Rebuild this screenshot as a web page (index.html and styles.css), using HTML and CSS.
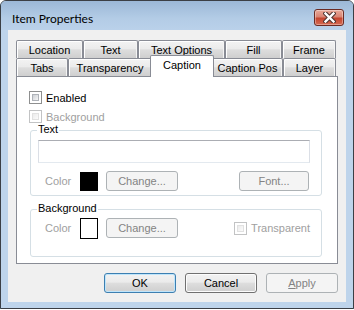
FILE: index.html
```html
<!DOCTYPE html>
<html>
<head>
<meta charset="utf-8">
<link rel="stylesheet" href="styles.css">
</head>
<body>
<div class="window">
  <div class="titlebar">
    <span class="title">Item Properties</span>
    <div class="close">
      <svg width="13" height="11" viewBox="0 0 13 11">
        <path d="M2.5 1.5 L10.5 9.5 M10.5 1.5 L2.5 9.5" stroke="#4a3330" stroke-width="4.4" stroke-linecap="square" fill="none"/>
        <path d="M2.5 1.5 L10.5 9.5 M10.5 1.5 L2.5 9.5" stroke="#ffffff" stroke-width="2.4" stroke-linecap="square" fill="none"/>
      </svg>
    </div>
  </div>
  <div class="client">
    <div class="tabctl">
      <div class="tabrow">
        <div class="tab w-location">Location</div>
        <div class="tab w-text">Text</div>
        <div class="tab w-textopt">Text Options</div>
        <div class="tab w-fill">Fill</div>
        <div class="tab w-frame">Frame</div>
      </div>
      <div class="tabrow">
        <div class="tab w-tabs">Tabs</div>
        <div class="tab w-transp">Transparency</div>
        <div class="tab sel">Caption</div>
        <div class="tab w-cappos">Caption Pos</div>
        <div class="tab w-layer">Layer</div>
      </div>
      <div class="panel">
        <div class="check-row"><span class="cb"></span><span>Enabled</span></div>
        <div class="check-row dis"><span class="cb"></span><span>Background</span></div>
        <div class="group g-text">
          <span class="glabel">Text</span>
          <div class="textbox"></div>
          <div class="color-row">
            <span class="clabel">Color</span>
            <span class="swatch black"></span>
            <span class="btn dis change">Change...</span>
            <span class="btn dis font">Font...</span>
          </div>
        </div>
        <div class="group g-bg">
          <span class="glabel">Background</span>
          <div class="color-row first">
            <span class="clabel">Color</span>
            <span class="swatch white"></span>
            <span class="btn dis change">Change...</span>
            <div class="check-row dis trans"><span class="cb"></span><span>Transparent</span></div>
          </div>
        </div>
      </div>
    </div>
    <div class="buttons">
      <span class="btn def">OK</span>
      <span class="btn">Cancel</span>
      <span class="btn dis"><u>A</u>pply</span>
    </div>
  </div>
  <div class="frame-bottom"></div>
</div>
</body>
</html>
```

FILE: styles.css
```css
html, body {
  margin: 0;
  padding: 0;
  background: #ffffff;
}

body {
  font-family: "Liberation Sans", Arial, sans-serif;
  font-size: 11px;
  color: #000;
}

.window {
  width: 354px;
  height: 309px;
  box-sizing: border-box;
  border: 1px solid #3b3f45;
  border-radius: 6px 6px 0 0;
  background: #bed4eb;
  display: flex;
  flex-direction: column;
  overflow: hidden;
  box-shadow: 0 1px 0 #43b2d4;
}

.titlebar {
  height: 29px;
  flex: none;
  display: flex;
  align-items: flex-start;
  background: linear-gradient(#9cb8d7, #b3cce6 60%, #bad1ea);
}

.title {
  font-family: Lato, "Liberation Sans", sans-serif;
  font-size: 12px;
  line-height: 16px;
  margin: 10px 0 0 11px;
  color: #000;
}

.close {
  box-sizing: border-box;
  width: 30px;
  height: 17px;
  margin: 8px 9px 0 auto;
  border: 1px solid #6b2b24;
  border-radius: 3px;
  background: linear-gradient(#e9a999, #d98473 45%, #c5452f 55%, #d66b53);
  box-shadow: inset 0 0 0 1px rgba(255, 255, 255, 0.35);
  display: flex;
  align-items: center;
  justify-content: center;
}

.close svg {
  display: block;
}

.client {
  flex: none;
  height: 272px;
  margin: 0 7px;
  background: #f0f0f0;
  box-sizing: border-box;
  padding: 10px 8px 0 8px;
}

.frame-bottom {
  flex: 1;
}

/* Tabs */
.tabctl {
  width: 322px;
}

.tabrow {
  display: flex;
  height: 18px;
  align-items: flex-start;
}

.tab {
  box-sizing: border-box;
  height: 18px;
  border: 1px solid #898c95;
  border-bottom: none;
  border-radius: 2px 2px 0 0;
  background: linear-gradient(#f3f3f3, #ebebeb 45%, #dddddd 52%, #cfcfcf);
  box-shadow: inset 1px 1px 0 #ffffff, inset -1px 0 0 #f4f4f4;
  display: flex;
  align-items: center;
  justify-content: center;
  white-space: nowrap;
  flex: none;
}

.w-location { width: 67px; }
.w-text { width: 55px; }
.w-textopt { width: 87px; }
.w-fill { width: 57px; }
.w-frame { width: 54px; }
.w-tabs { width: 52px; }
.w-transp { width: 84px; }
.w-cappos { width: 71px; }
.w-layer { width: 53px; }

.tab.sel {
  width: 64px;
  height: 22px;
  margin: -3px -2px 0 -2px;
  padding-bottom: 4px;
  background: #ffffff;
  box-shadow: none;
  position: relative;
  z-index: 2;
}

.panel {
  box-sizing: border-box;
  width: 322px;
  height: 188px;
  border: 1px solid #898c95;
  background: #ffffff;
  padding: 11px 0 0 12px;
}

/* Checkboxes */
.check-row {
  display: flex;
  align-items: center;
  height: 19px;
  gap: 4px;
}

.cb {
  box-sizing: border-box;
  width: 13px;
  height: 13px;
  border: 1px solid #8e8f8f;
  background: #ffffff;
  padding: 2px;
  flex: none;
}

.cb::after {
  content: "";
  display: block;
  box-sizing: border-box;
  width: 7px;
  height: 7px;
  border: 1px solid #aeb2b8;
  background: linear-gradient(135deg, #cdd0d5, #f6f6f6);
}

.check-row.dis {
  color: #a0a0a0;
}

.check-row.dis .cb {
  border-color: #c2c3c4;
}

.check-row.dis .cb::after {
  border-color: #e1e1e1;
  background: linear-gradient(135deg, #ebebeb, #fbfbfb);
}

/* Group boxes */
.group {
  position: relative;
  box-sizing: border-box;
  width: 292px;
  margin-left: 1px;
  border: 1px solid #d5dfe5;
  border-radius: 3px;
}

.g-text {
  margin-top: 4px;
  height: 66px;
  padding: 9px 11px 0 7px;
}

.g-bg {
  margin-top: 13px;
  height: 48px;
  padding: 8px 11px 0 7px;
}

.glabel {
  position: absolute;
  top: -8px;
  left: 6px;
  padding: 0 1px;
  background: #ffffff;
  line-height: 13px;
}

.textbox {
  box-sizing: border-box;
  height: 23px;
  border: 1px solid #abadb3;
  border-left-color: #dbdfe6;
  border-right-color: #dbdfe6;
  border-bottom-color: #e3e9ef;
  background: #ffffff;
}

.color-row {
  display: flex;
  align-items: center;
  height: 20px;
  margin-top: 8px;
  padding-left: 7px;
}

.color-row.first {
  margin-top: 0;
}

.clabel {
  width: 35px;
  color: #a0a0a0;
  flex: none;
}

.swatch {
  box-sizing: border-box;
  width: 18px;
  height: 19px;
  flex: none;
}

.swatch.black {
  background: #000000;
}

.swatch.white {
  height: 21px;
  background: #ffffff;
  border: 1px solid #000000;
}

/* Buttons */
.btn {
  box-sizing: border-box;
  width: 72px;
  height: 20px;
  border: 1px solid #707070;
  border-radius: 3px;
  background: linear-gradient(#f2f2f2, #ebebeb 45%, #dddddd 52%, #cfcfcf);
  box-shadow: inset 0 0 0 1px #fcfcfc;
  display: flex;
  align-items: center;
  justify-content: center;
  flex: none;
}

.btn.dis {
  border-color: #adb2b5;
  background: #f4f4f4;
  box-shadow: none;
  color: #838383;
}

.btn.def {
  border-color: #3c7fb1;
  box-shadow: inset 0 0 0 1px #bfe5fb;
}

.change {
  margin-left: 8px;
}

.font {
  width: 70px;
  margin-left: auto;
  margin-right: 1px;
}

.trans {
  margin-left: auto;
}

.buttons {
  display: flex;
  justify-content: flex-end;
  gap: 9px;
  margin-top: 9px;
}
```
